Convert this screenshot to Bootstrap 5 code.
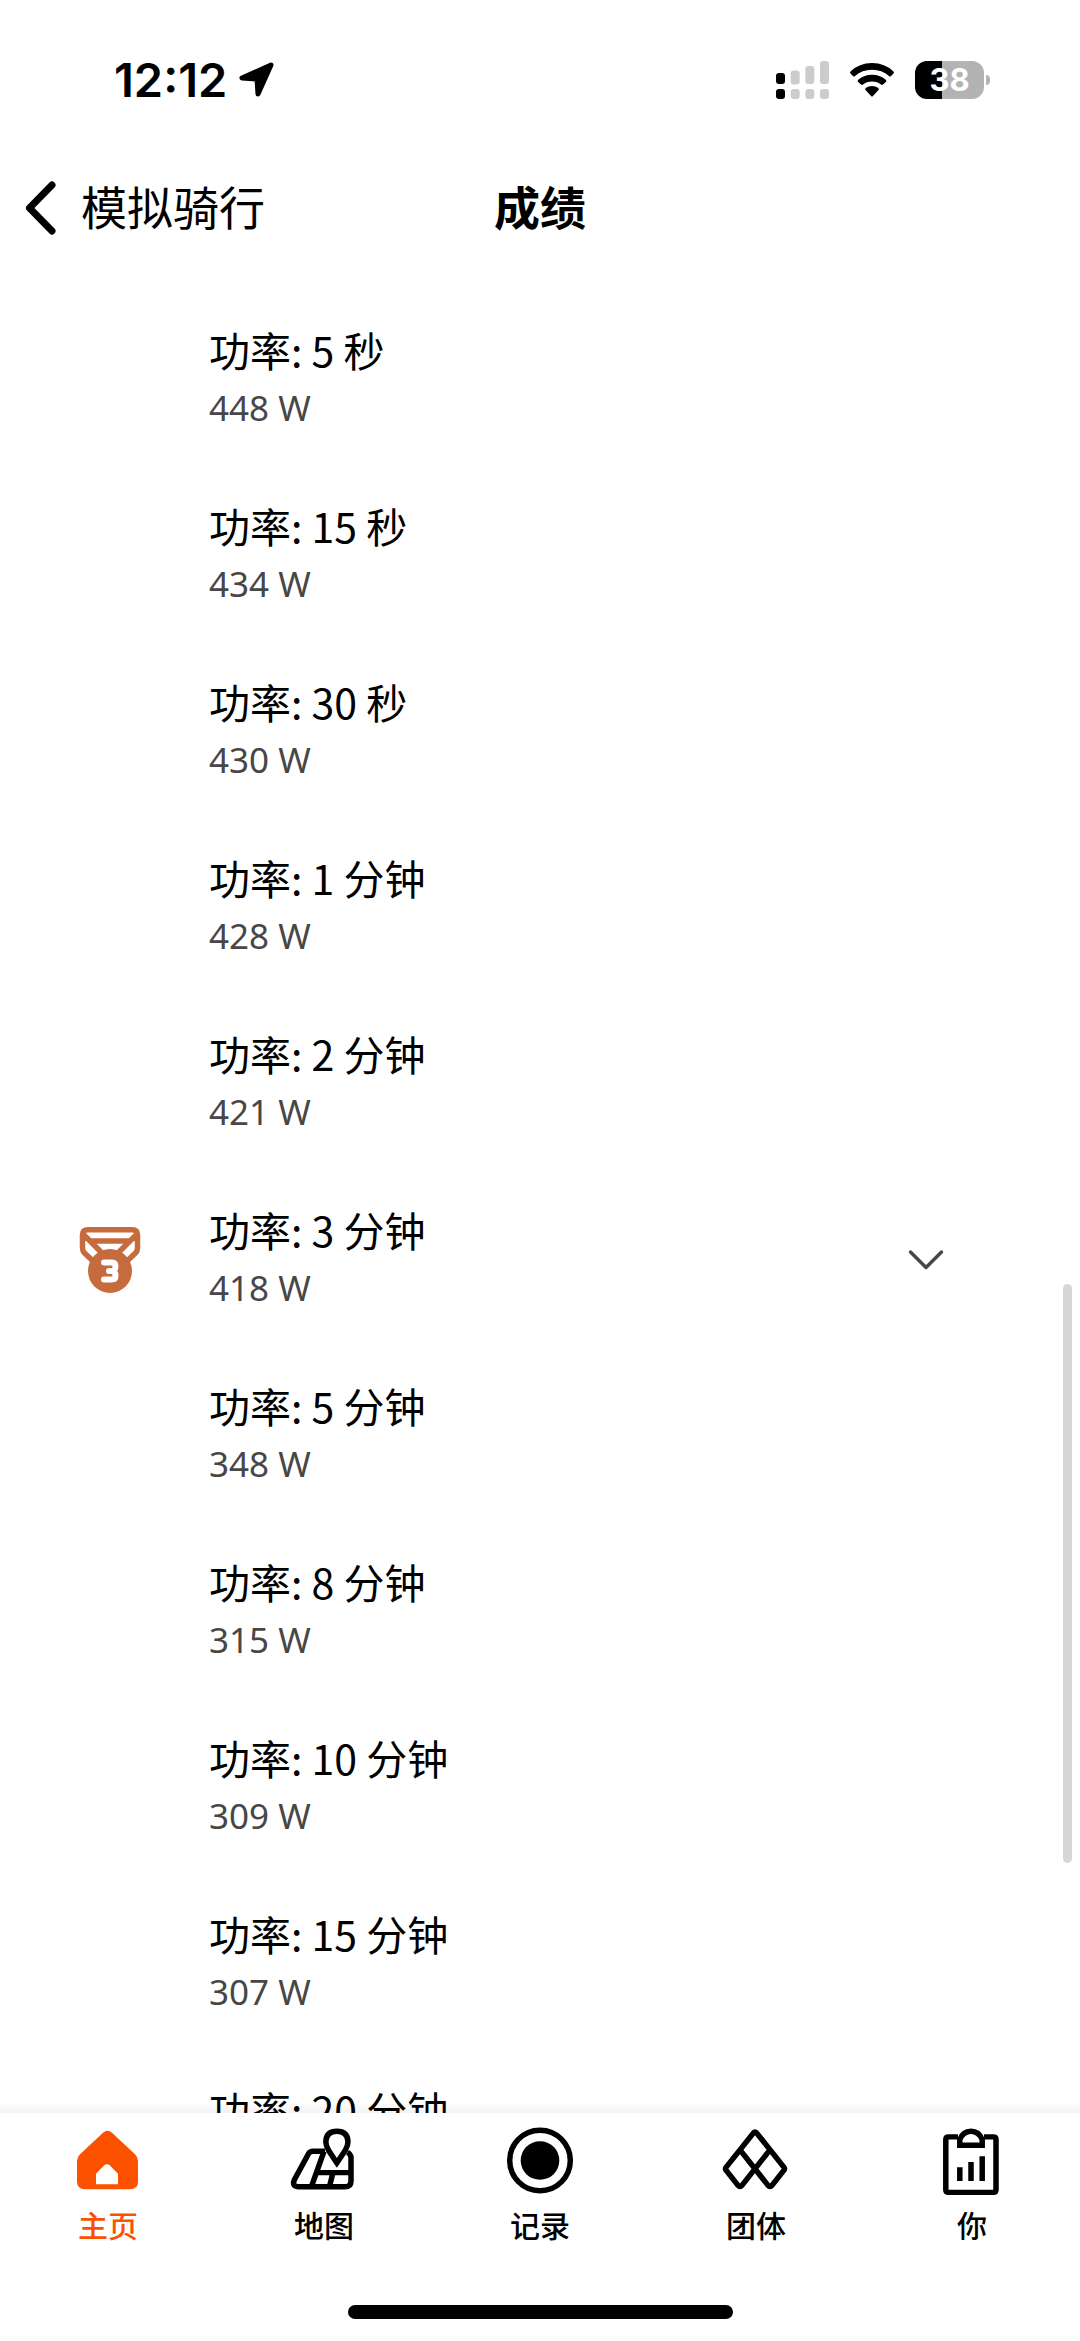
<!DOCTYPE html>
<html lang="zh-CN">
<head>
<meta charset="utf-8">
<meta name="viewport" content="width=device-width, initial-scale=1">
<title>成绩</title>
<link href="https://cdn.jsdelivr.net/npm/bootstrap@5.3.0/dist/css/bootstrap.min.css" rel="stylesheet">
<style>
  body { font-family: "Noto Sans CJK SC", sans-serif; color: #000; background: #fff; }
  svg { display: block; flex: none; }
  .ln { fill: none; stroke: currentColor; stroke-linejoin: round; stroke-linecap: round; }

  .status-bar { height: 140px; padding: 20px 90px 0 114px; font-family: Inter, sans-serif; }
  .clock { font-size: 47px; font-weight: 600; line-height: 56px; }
  .clock-group { gap: 10px; }
  .wifi { margin: 0 20px; }
  .battery { width: 69px; height: 38px; border-radius: 12px; color: #fff; font-size: 31px; font-weight: 700; line-height: 38px;
             background: linear-gradient(to right, #000 39%, #b3b3b3 39%); }
  .battery-tip { width: 4px; height: 10px; margin-left: 2px; border-radius: 0 4px 4px 0; background: #b3b3b3; }

  .top-nav { height: 136px; padding: 0 24px; font-size: 46px; line-height: 64px; }
  .top-nav > * { flex: 1 1 0; }
  .page-title, .back-label { padding-bottom: 6px; font-size: 46px; line-height: 64px; }
  .back-link { color: #000; gap: 23px; }

  .effort-list { padding-top: 16px; min-height: 0; }
  .effort { height: 176px; padding: 0 136px 0 0; }
  .medal-slot { width: 209px; padding-left: 78px; flex: none; }
  .effort-text { min-height: 118px; }
  .effort-name { font-size: 41px; line-height: 56px; }
  .effort-value { font-family: "Noto Sans", sans-serif; font-size: 35px; line-height: 62px; color: #474747; }
  .expand { color: #474747; }
  .scroll-thumb { right: 8px; top: 1008px; width: 9px; height: 579px; border-radius: 5px; background: #d6d6d6; }
  .edge { height: 9px; background: linear-gradient(rgba(0,0,0,.01), rgba(0,0,0,.05)); }

  .tab-bar { padding: 13px 0 22px; background: #fff; }
  .tab-link { color: #000; gap: 6px; font-size: 30px; font-weight: 500; line-height: 44px; }
  .tab-link.active { color: #fc5200; }
  .home-indicator { width: 385px; height: 14px; margin-top: 59px; border-radius: 7px; background: #000; }
</style>
</head>
<body>
<div class="d-flex flex-column vh-100 overflow-hidden">

  <div class="status-bar d-flex align-items-center justify-content-between flex-shrink-0">
    <div class="clock-group d-flex align-items-center">
      <span class="clock">12:12</span>
      <svg width="38" height="38" viewBox="0 0 38 38"><path class="ln" stroke-width="5" style="fill:currentColor" d="M34 4 L5 17 L20 18 L21 33 Z"/></svg>
    </div>
    <div class="d-flex align-items-center">
      <svg width="53" height="38" viewBox="0 0 53 38" fill="#ccc">
        <rect x="0" y="12" width="9" height="11" rx="3" fill="#000"/><rect x="0" y="28" width="9" height="10" rx="3" fill="#000"/>
        <rect x="14.700" y="9.500" width="9" height="14" rx="3"/><rect x="14.700" y="28" width="9" height="10" rx="3"/>
        <rect x="29.300" y="5" width="9" height="18" rx="3"/><rect x="29.300" y="28" width="9" height="10" rx="3"/>
        <rect x="44" y="0" width="9" height="23" rx="3"/><rect x="44" y="28" width="9" height="10" rx="3"/>
      </svg>
      <svg class="wifi" width="46" height="36" viewBox="0 0 46 36">
        <path d="M1.500 9.500 Q10 1 23 1 Q36 1 44.500 9.500 Q45.500 10.500 44.500 11.500 L42 14 Q41 15 40 14 Q33 7.700 23 7.700 Q13 7.700 6 14 Q5 15 4 14 L1.500 11.500 Q0.500 10.500 1.500 9.500 Z"/>
        <path d="M9.500 17.500 Q15 12.700 23 12.700 Q31 12.700 36.500 17.500 Q38 18.700 37 19.700 L34 22.500 Q33 23.300 32 22.500 Q28.500 19.500 23 19.500 Q17.500 19.500 14 22.500 Q13 23.300 12 22.500 L9 19.700 Q8 18.700 9.500 17.500 Z"/>
        <path d="M17 25.800 Q19.500 24 23 24 Q26.500 24 29 25.800 Q30.500 27 29.500 28 L24 34 Q23 35 22 34 L16.500 28 Q15.500 27 17 25.800 Z"/>
      </svg>
      <div class="battery text-center">38</div>
      <div class="battery-tip"></div>
    </div>
  </div>

  <header class="top-nav d-flex align-items-center flex-shrink-0">
    <a href="#" class="back-link d-flex align-items-center text-decoration-none">
      <svg width="34" height="54" viewBox="0 0 34 54"><path class="ln" stroke-width="7" d="M28 4 L5.500 27 L28 50"/></svg>
      <span class="back-label">模拟骑行</span>
    </a>
    <h1 class="page-title m-0 fw-bold text-center">成绩</h1>
    <div></div>
  </header>

  <main class="effort-list flex-grow-1 overflow-hidden position-relative">
    <ul class="list-unstyled m-0">
      <li class="effort d-flex align-items-center"><div class="medal-slot"></div><div class="effort-text"><div class="effort-name">功率: 5 秒</div><div class="effort-value">448 W</div></div></li>
      <li class="effort d-flex align-items-center"><div class="medal-slot"></div><div class="effort-text"><div class="effort-name">功率: 15 秒</div><div class="effort-value">434 W</div></div></li>
      <li class="effort d-flex align-items-center"><div class="medal-slot"></div><div class="effort-text"><div class="effort-name">功率: 30 秒</div><div class="effort-value">430 W</div></div></li>
      <li class="effort d-flex align-items-center"><div class="medal-slot"></div><div class="effort-text"><div class="effort-name">功率: 1 分钟</div><div class="effort-value">428 W</div></div></li>
      <li class="effort d-flex align-items-center"><div class="medal-slot"></div><div class="effort-text"><div class="effort-name">功率: 2 分钟</div><div class="effort-value">421 W</div></div></li>
      <li class="effort d-flex align-items-center">
        <div class="medal-slot">
          <svg width="64" height="68" viewBox="0 0 64 68" color="#c66b3d">
            <path class="ln" stroke-width="5.500" d="M10 3.800 H54 Q59.500 3.800 59.500 9 V22 Q59.500 25 57.500 27 L48 36 M10 3.800 Q4.500 3.800 4.500 9 V22 Q4.500 25 6.500 27 L16 36 M14 15 H50 M6 9 L26 29 M58 9 L38 29"/>
            <circle cx="32" cy="45" r="22" fill="currentColor"/>
            <path d="M26 36.500 H34 Q37.500 36.500 37.500 40 Q37.500 43.500 35.500 45 Q37.500 46.500 37.500 50 Q37.500 53.500 34 53.500 H26 M31 45 H35" fill="none" stroke="#fff" stroke-width="6" stroke-linejoin="round" stroke-linecap="round"/>
          </svg>
        </div>
        <div class="effort-text"><div class="effort-name">功率: 3 分钟</div><div class="effort-value">418 W</div></div>
        <button type="button" class="expand btn border-0 p-0 ms-auto" aria-label="展开">
          <svg width="36" height="22" viewBox="0 0 36 22"><path class="ln" stroke-width="3.500" d="M2.500 3 L18 18.500 L33.500 3"/></svg>
        </button>
      </li>
      <li class="effort d-flex align-items-center"><div class="medal-slot"></div><div class="effort-text"><div class="effort-name">功率: 5 分钟</div><div class="effort-value">348 W</div></div></li>
      <li class="effort d-flex align-items-center"><div class="medal-slot"></div><div class="effort-text"><div class="effort-name">功率: 8 分钟</div><div class="effort-value">315 W</div></div></li>
      <li class="effort d-flex align-items-center"><div class="medal-slot"></div><div class="effort-text"><div class="effort-name">功率: 10 分钟</div><div class="effort-value">309 W</div></div></li>
      <li class="effort d-flex align-items-center"><div class="medal-slot"></div><div class="effort-text"><div class="effort-name">功率: 15 分钟</div><div class="effort-value">307 W</div></div></li>
      <li class="effort d-flex align-items-center"><div class="medal-slot"></div><div class="effort-text"><div class="effort-name">功率: 20 分钟</div></div></li>
    </ul>
    <div class="scroll-thumb position-absolute"></div>
    <div class="edge position-absolute bottom-0 start-0 end-0"></div>
  </main>

  <footer class="tab-bar flex-shrink-0">
    <nav class="d-flex">
      <a href="#" class="tab-link active d-flex flex-column align-items-center flex-fill w-100 text-decoration-none" aria-current="page">
        <svg width="72" height="70" viewBox="0 0 72 72" preserveAspectRatio="none"><path fill="currentColor" fill-rule="evenodd" d="M31 7 Q35.500 3 40 7 L63 29 Q66 32 66 36 V57 Q66 65 58 65 H13 Q5 65 5 57 V36 Q5 32 8 29 Z M24 60 H46 V49 L38 40.500 Q35 38 32 40.500 L24 49 Z"/></svg>
        <span>主页</span>
      </a>
      <a href="#" class="tab-link d-flex flex-column align-items-center flex-fill w-100 text-decoration-none">
        <svg width="72" height="70" viewBox="0 0 72 72" preserveAspectRatio="none"><g class="ln" stroke-width="5.500" style="stroke-linecap:butt">
          <path d="M37 26 H25 Q22 26 20.500 28.500 L6.500 55 Q3.500 62 10 62.500 H57 Q63 62.500 63 56.500 V33 Q63 29 59.500 27"/>
          <path d="M36 26 L23.500 62 M29 48 H63 M45 48 L41.500 62"/>
          <path style="stroke-linejoin:miter" d="M48.900 38 L40.500 25 Q37.800 20 37.800 16 Q38.300 5.400 48.900 5.400 Q59.500 5.400 60 16 Q60 20 57.300 25 Z"/>
        </g></svg>
        <span>地图</span>
      </a>
      <a href="#" class="tab-link d-flex flex-column align-items-center flex-fill w-100 text-decoration-none">
        <svg width="72" height="70" viewBox="0 0 72 70"><circle class="ln" stroke-width="5.500" cx="36" cy="34.500" r="30.300"/><circle cx="36" cy="34.500" r="19.300" fill="currentColor"/></svg>
        <span>记录</span>
      </a>
      <a href="#" class="tab-link d-flex flex-column align-items-center flex-fill w-100 text-decoration-none">
        <svg width="72" height="70" viewBox="0 0 72 72" preserveAspectRatio="none"><path class="ln" stroke-width="5.500" d="M20 24.500 L33.500 7 Q35 5 36.500 7 L64 42.500 Q65 44 64 45.500 L52 61 Q50 63.500 48 61 L20 24.500 L6 42.500 Q5 44 6 45.500 L18 61 Q20 63.500 22 61 L50 24.500"/></svg>
        <span>团体</span>
      </a>
      <a href="#" class="tab-link d-flex flex-column align-items-center flex-fill w-100 text-decoration-none">
        <svg width="72" height="70" viewBox="0 0 72 72" preserveAspectRatio="none"><g class="ln" stroke-width="5.500" style="stroke-linecap:butt">
          <path d="M22 11.200 H12.500 Q9.800 11.200 9.800 14 V65.500 Q9.800 68.200 12.500 68.200 H57.500 Q60 68.200 60 65.500 V14 Q60 11.200 57.500 11.200 H48"/>
          <path style="stroke-linejoin:miter" d="M23.800 19.800 H46.200 V14 Q43 5.400 35 5.400 Q27 5.400 23.800 14 Z"/>
          <path d="M23.800 56.500 V42.500 M35 56.500 V37 M46.200 56.500 V31"/>
        </g></svg>
        <span>你</span>
      </a>
    </nav>
    <div class="home-indicator mx-auto"></div>
  </footer>
</div>
<script src="https://cdn.jsdelivr.net/npm/bootstrap@5.3.0/dist/js/bootstrap.bundle.min.js"></script>
</body>
</html>
